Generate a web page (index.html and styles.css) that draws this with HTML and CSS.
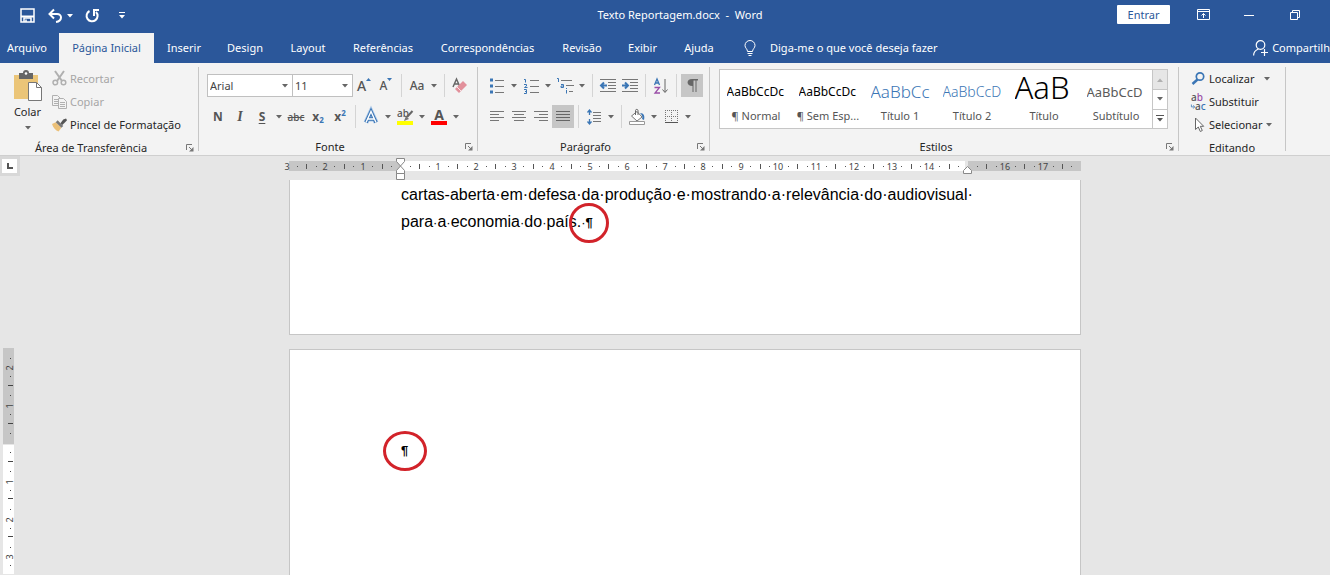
FILE: index.html
```html
<!DOCTYPE html>
<html lang="pt-BR">
<head>
<meta charset="utf-8">
<meta name="viewport" content="width=device-width, initial-scale=1">
<title>Texto Reportagem.docx - Word</title>
<link rel="stylesheet" href="styles.css">
</head>
<body>
<svg class="defs" aria-hidden="true">
  <symbol id="caret" viewBox="0 0 6 4"><path d="M0 0h6L3 3.4z" fill="currentColor"/></symbol>
  <symbol id="launch" viewBox="0 0 8 8"><path d="M.5 6V.5H6M3 3l3 3" fill="none" stroke="#777"/><path d="M7.500 3v4.500H3L7.500 3z" fill="#777"/></symbol>
</svg>

<header class="top">
  <div class="titlebar">
    <div class="quick">
      <button class="q" aria-label="Salvar"><svg width="15" height="15" viewBox="0 0 15 15"><path d="M1 1h13v13H1z" fill="none" stroke="#fff" stroke-width="1.500"/><path d="M1 8.500h13" stroke="#fff" stroke-width="2"/><path d="M4 14v-4h7v4M6 11.500v2.500" fill="none" stroke="#fff" stroke-width="1.500"/></svg></button>
      <button class="q undo" aria-label="Desfazer"><svg width="15" height="14" viewBox="0 0 15 14"><path d="M2 5h7c5.500 0 5.500 7-1 8" fill="none" stroke="#fff" stroke-width="2"/><path d="M6 .5L1.500 5 6 9.500" fill="none" stroke="#fff" stroke-width="2"/></svg><svg class="caret"><use href="#caret"/></svg></button>
      <button class="q" aria-label="Refazer"><svg width="15" height="15" viewBox="0 0 15 15"><path d="M4.500 3a5.500 5.500 0 1 0 6.500 1" fill="none" stroke="#fff" stroke-width="2"/><path d="M9 8V2h5" fill="none" stroke="#fff" stroke-width="2"/></svg></button>
      <button class="q" aria-label="Personalizar"><svg width="6" height="7" viewBox="0 0 6 7"><path d="M0 .5h6" stroke="#fff"/><path d="M0 3h6L3 6.400z" fill="#fff"/></svg></button>
    </div>
    <div class="doc-title">Texto Reportagem.docx&nbsp; -&nbsp; Word</div>
    <div class="window">
      <button class="signin">Entrar</button>
      <button class="w" aria-label="Opções da faixa"><svg width="13" height="11" viewBox="0 0 13 11"><path d="M.5.5h12v10H.5zM.5 2.500h12M6.500 9V4.500M4.500 6.500l2-2 2 2" fill="none" stroke="#fff"/></svg></button>
      <button class="w" aria-label="Minimizar"><svg width="10" height="10" viewBox="0 0 10 10"><path d="M0 5.500h10" stroke="#fff"/></svg></button>
      <button class="w" aria-label="Restaurar"><svg width="10" height="10" viewBox="0 0 10 10"><path d="M.5 2.500h7v7h-7zM2.500 2.500v-2h7v7h-2" fill="none" stroke="#fff"/></svg></button>
    </div>
  </div>
  <nav class="tabs">
    <a href="#">Arquivo</a><a href="#" class="on" aria-current="page">Página Inicial</a><a href="#">Inserir</a><a href="#">Design</a><a href="#">Layout</a><a href="#">Referências</a><a href="#">Correspondências</a><a href="#">Revisão</a><a href="#">Exibir</a><a href="#">Ajuda</a>
    <a href="#" class="tell"><svg width="12" height="16" viewBox="0 0 12 16"><path d="M3.500 11.500C3.500 9 1 8 1 5.500a5 5 0 0 1 10 0C11 8 8.500 9 8.500 11.500zM3.500 13.500h5M4.500 15.500h3" fill="none" stroke="#fff"/></svg>Diga-me o que você deseja fazer</a>
    <a href="#" class="share"><svg width="15" height="16" viewBox="0 0 15 16"><circle cx="7.500" cy="5" r="4.300" fill="none" stroke="#fff" stroke-width="1.200"/><path d="M.6 15.500c0-3.500 2-5.500 4.900-6.500M8 12.500h7M11.500 9v7" fill="none" stroke="#fff" stroke-width="1.200"/></svg>Compartilh</a>
  </nav>
</header>

<section class="ribbon">
  <div class="group clip">
    <div class="body">
      <button class="paste">
        <svg width="28" height="30" viewBox="0 0 28 30"><path d="M0 4h24v24H0z" fill="#ebc578"/><path d="M5 2h4a3 3 0 0 1 6 0h4v6H5z" fill="#666"/><circle cx="12" cy="2.500" r="1.300" fill="#fff"/><path d="M14.500 11.500h8l5 5v13h-13z" fill="#fff" stroke="#777"/><path d="M22.500 11.500v5h5" fill="none" stroke="#777"/></svg>
        <span>Colar</span><svg class="caret"><use href="#caret"/></svg>
      </button>
      <div class="stack">
        <button class="line" disabled><svg width="15" height="15" viewBox="0 0 15 15"><g fill="none" stroke="#b0b0b0" stroke-width="1.500"><path d="M3 0l7 10M12 0L5 10" stroke-width="2"/><circle cx="3.300" cy="11.500" r="2.300"/><circle cx="11.500" cy="11.500" r="2.300"/></g></svg>Recortar</button>
        <button class="line" disabled><svg width="15" height="14" viewBox="0 0 15 14"><g fill="#f3f3f3" stroke="#b0b0b0"><path d="M.5.5h5l3 3v7h-8zM2 4.500h4M2 6.500h4M2 8.500h4"/><path d="M6.500 3.500h5l3 3v7h-8zM8 7.500h5M8 9.500h5M8 11.500h5"/></g></svg>Copiar</button>
        <button class="line"><svg width="15" height="14" viewBox="0 0 16 14"><path d="M0 6l4-2 6 6-3 4C4 13 1 10 0 6z" fill="#ebc078"/><path d="M4 4l2-2 6 6-2 2z" fill="#777"/><path d="M9 5l3-4 3-1 1 2-2 2-3 3z" fill="#555"/></svg>Pincel de Formatação</button>
      </div>
    </div>
    <footer><span>Área de Transferência</span><button class="launch" aria-label="Mais"><svg><use href="#launch"/></svg></button></footer>
  </div>

  <div class="group font">
    <div class="body rows">
      <div class="row">
        <label class="combo wide"><select aria-label="Fonte"><option>Arial</option></select><svg class="caret"><use href="#caret"/></svg></label>
        <label class="combo"><select aria-label="Tamanho"><option>11</option></select><svg class="caret"><use href="#caret"/></svg></label>
        <button class="b gl first" aria-label="Aumentar"><span class="big">A</span><svg class="tri" width="5" height="3" viewBox="0 0 5 3"><path d="M0 3L2.500 0 5 3z" fill="#3b76b5"/></svg></button>
        <button class="b gl" aria-label="Diminuir"><span>A</span><svg class="tri" width="5" height="3" viewBox="0 0 5 3"><path d="M0 0L2.500 3 5 0z" fill="#3b76b5"/></svg></button>
        <i class="sep"></i>
        <button class="b d gl"><span class="ic">Aa</span><svg class="caret"><use href="#caret"/></svg></button>
        <i class="sep"></i>
        <button class="b" aria-label="Limpar"><svg width="16" height="16" viewBox="0 0 16 16"><path d="M1 9L4.500 1 8 9M2.500 6h4" fill="none" stroke="#666" stroke-width="1.500"/><path d="M11 3l4 4-8 8-4-4z" fill="#e2909b"/><path d="M5 9l4 4" stroke="#f8e4e7"/></svg></button>
      </div>
      <div class="row">
        <button class="b gl strong">N</button>
        <button class="b gl ital">I</button>
        <button class="b d gl strong"><span class="ic under">S</span><svg class="caret"><use href="#caret"/></svg></button>
        <button class="b gl strike">abc</button>
        <button class="b gl strong">x<sub>2</sub></button>
        <button class="b gl strong">x<sup>2</sup></button>
        <i class="sep"></i>
        <button class="b d" aria-label="Efeitos"><span class="ic"><svg width="16" height="16" viewBox="0 0 16 16"><path d="M3 13.500L8 2.500l5 11M5 10h6" fill="none" stroke="#a9c9ea" stroke-width="5"/><path d="M3 13.500L8 2.500l5 11M5 10h6" fill="none" stroke="#3b74b3" stroke-width="3.400"/><path d="M3 13.500L8 2.500l5 11M5 10h6" fill="none" stroke="#fff" stroke-width="1.400"/></svg></span><svg class="caret"><use href="#caret"/></svg></button>
        <button class="b d gl" aria-label="Realce"><span class="ic mark"><span>ab</span><svg width="10" height="11" viewBox="0 0 10 11"><path d="M9.500 1L4 7" stroke="#666" stroke-width="2"/><path d="M3 6l3 3-5 2z" fill="#777"/></svg></span><svg class="caret"><use href="#caret"/></svg></button>
        <button class="b d gl" aria-label="Cor"><span class="ic mark red"><span>A</span></span><svg class="caret"><use href="#caret"/></svg></button>
      </div>
    </div>
    <footer><span>Fonte</span><button class="launch" aria-label="Mais"><svg><use href="#launch"/></svg></button></footer>
  </div>

  <div class="group para">
    <div class="body rows">
      <div class="row">
        <button class="b d" aria-label="Marcadores"><span class="ic"><svg width="14" height="16" viewBox="0 0 14 16"><path d="M0 .5h3v3H0zM0 6.500h3v3H0zM0 12.500h3v3H0z" fill="#3b76b5"/><path d="M5 2.500h9M5 8.500h9M5 14.500h9" stroke="#777"/></svg></span><svg class="caret"><use href="#caret"/></svg></button>
        <button class="b d" aria-label="Numeração"><span class="ic"><svg width="15" height="16" viewBox="0 0 15 16"><path d="M0 1.500h1.500V4.500M0 6.500h2.500V8L.5 9.500h3M0 11.500h2.500v4H0M1 13.500h1.500" fill="none" stroke="#3b76b5"/><path d="M6 2.500h9M6 8.500h9M6 14.500h9" stroke="#777"/></svg></span><svg class="caret"><use href="#caret"/></svg></button>
        <button class="b d" aria-label="Vários níveis"><span class="ic"><svg width="17" height="16" viewBox="0 0 17 16"><path d="M0 .5h1.500V4M4 6.500h2.500v3H4V8h2M9.500 10v1M9.500 12v3.500" fill="none" stroke="#3b76b5"/><path d="M4 2.500h11M9 7.500h8M12 13.500h4" stroke="#777"/></svg></span><svg class="caret"><use href="#caret"/></svg></button>
        <i class="sep"></i>
        <button class="b" aria-label="Diminuir recuo"><svg width="16" height="13" viewBox="0 0 16 13"><path d="M0 .5h16M8 3.500h8M8 6.500h8M8 9.500h8M0 12.500h16" stroke="#777"/><path d="M7 6.500H1M4 3.500l-3 3 3 3" fill="none" stroke="#3b76b5" stroke-width="2"/></svg></button>
        <button class="b" aria-label="Aumentar recuo"><svg width="16" height="13" viewBox="0 0 16 13"><path d="M0 .5h16M8 3.500h8M8 6.500h8M8 9.500h8M0 12.500h16" stroke="#777"/><path d="M0 6.500h6M3 3.500l3 3-3 3" fill="none" stroke="#3b76b5" stroke-width="2"/></svg></button>
        <i class="sep"></i>
        <button class="b" aria-label="Classificar"><svg width="14" height="16" viewBox="0 0 14 16"><path d="M.5 7L3 1l2.500 6M1.500 5h3" fill="none" stroke="#3b76b5" stroke-width="1.300"/><path d="M.5 9.500h5L1 15h5" fill="none" stroke="#9a4fa8" stroke-width="1.300"/><path d="M11 1v13M8.500 11.500l2.500 3 2.500-3" fill="none" stroke="#666"/></svg></button>
        <i class="sep"></i>
        <button class="b sel" aria-label="Mostrar tudo" aria-pressed="true"><svg width="11" height="13" viewBox="0 0 11 13"><path d="M5 0h6v1.500H9.500V13H8.500V1.500h-2V13h-1V7C-1 7-1 0 5 0z" fill="#666"/></svg></button>
      </div>
      <div class="row">
        <button class="b" aria-label="Esquerda"><svg width="14" height="11" viewBox="0 0 14 11"><path d="M0 .5h14M0 3.500h9M0 6.500h14M0 9.500h9" stroke="#777"/></svg></button>
        <button class="b" aria-label="Centro"><svg width="14" height="11" viewBox="0 0 14 11"><path d="M0 .5h14M2 3.500h10M0 6.500h14M2 9.500h10" stroke="#777"/></svg></button>
        <button class="b" aria-label="Direita"><svg width="14" height="11" viewBox="0 0 14 11"><path d="M0 .5h14M5 3.500h9M0 6.500h14M5 9.500h9" stroke="#777"/></svg></button>
        <button class="b sel" aria-label="Justificar" aria-pressed="true"><svg width="14" height="11" viewBox="0 0 14 11"><path d="M0 .5h14M0 3.500h14M0 6.500h14M0 9.500h14" stroke="#666"/></svg></button>
        <i class="sep"></i>
        <button class="b d" aria-label="Espaçamento"><span class="ic"><svg width="14" height="16" viewBox="0 0 14 16"><path d="M6 3.500h8M6 6.500h8M6 9.500h8M6 12.500h8" stroke="#777"/><path d="M2.500 1v5M.5 3.500l2-2.500 2 2.500M2.500 15v-5M.5 12.500l2 2.500 2-2.500" fill="none" stroke="#3b76b5" stroke-width="1.300"/></svg></span><svg class="caret"><use href="#caret"/></svg></button>
        <i class="sep"></i>
        <button class="b d" aria-label="Sombreamento"><span class="ic"><svg width="16" height="16" viewBox="0 0 16 16"><path d="M2.500 7L8 2.500 13 8l-5 4z" fill="#fff" stroke="#777"/><path d="M6.500 6V1.500C6.500 0 9 0 9 1.500V6" fill="none" stroke="#666"/><path d="M11 4c4 0 5 3 4 7l-2-1c1-2 0-4-2-6z" fill="#3b76b5"/><path d="M.5 12.500h15v3H.5z" fill="#fff" stroke="#999"/></svg></span><svg class="caret"><use href="#caret"/></svg></button>
        <button class="b d" aria-label="Bordas"><span class="ic"><svg width="13" height="13" viewBox="0 0 13 13"><path d="M0 .5h13M0 6.500h13M.5 0v12M6.500 0v12M12.500 0v12" stroke="#777" stroke-dasharray="1 1"/><path d="M0 12.500h13" stroke="#555"/></svg></span><svg class="caret"><use href="#caret"/></svg></button>
      </div>
    </div>
    <footer><span>Parágrafo</span><button class="launch" aria-label="Mais"><svg><use href="#launch"/></svg></button></footer>
  </div>

  <div class="group styles">
    <div class="body">
      <div class="gallery">
        <button class="style"><span class="pv">AaBbCcDc</span><span>¶ Normal</span></button>
        <button class="style"><span class="pv">AaBbCcDc</span><span>¶ Sem Esp...</span></button>
        <button class="style"><span class="pv h1">AaBbCc</span><span>Título 1</span></button>
        <button class="style"><span class="pv h2">AaBbCcD</span><span>Título 2</span></button>
        <button class="style"><span class="pv tt">AaB</span><span>Título</span></button>
        <button class="style"><span class="pv st">AaBbCcD</span><span>Subtítulo</span></button>
        <div class="scroller">
          <button disabled aria-label="Acima"><svg class="caret up"><use href="#caret"/></svg></button>
          <button aria-label="Abaixo"><svg class="caret"><use href="#caret"/></svg></button>
          <button aria-label="Mais estilos"><svg width="8" height="7" viewBox="0 0 8 7"><path d="M0 .5h8" stroke="#555"/><path d="M1 3h6L4 6.500z" fill="#555"/></svg></button>
        </div>
      </div>
    </div>
    <footer><span>Estilos</span><button class="launch" aria-label="Mais"><svg><use href="#launch"/></svg></button></footer>
  </div>

  <div class="group edit">
    <div class="body">
      <div class="stack">
        <button class="line find"><svg width="15" height="13" viewBox="0 0 15 13"><circle cx="9" cy="4.500" r="3.700" fill="none" stroke="#3b76b5" stroke-width="1.700"/><path d="M6.500 7.500L1.500 12" stroke="#3b76b5" stroke-width="2.500"/></svg><span>Localizar</span><svg class="caret"><use href="#caret"/></svg></button>
        <button class="line"><span class="swap" aria-hidden="true"><span>a<b>b</b></span><span class="ac"><svg width="4" height="5" viewBox="0 0 5 5"><path d="M.5 0v3H4M3 1l1.500 2L3 5" fill="none" stroke="#3b76b5"/></svg>a<em>c</em></span></span>Substituir</button>
        <button class="line pick"><svg width="15" height="16" viewBox="0 0 15 16"><path d="M4.500 1v11.500l2.800-2.500 2 4.500 2-1-2-4.200h3.400z" fill="#fff" stroke="#666"/></svg><span>Selecionar</span><svg class="caret"><use href="#caret"/></svg></button>
      </div>
    </div>
    <footer><span>Editando</span></footer>
  </div>
</section>

<main class="work">
  <aside class="side">
    <button class="tabstop" aria-label="Tabulação"><svg width="6" height="6" viewBox="0 0 6 6"><path d="M1 0v5h5" fill="none" stroke="#555" stroke-width="2"/></svg></button>
    <svg class="vruler" width="11" height="226" viewBox="0 0 11 226">
      <path d="M0 0h11v96H0z" fill="#c6c6c6"/><path d="M0 97h11v129H0z" fill="#fff"/>
      <g stroke="#444" shape-rendering="crispEdges"><path d="M7.500 9.500V226" stroke-dasharray="1 17.900"/><path d="M7.500 37V226" stroke-width="5" stroke-dasharray="1 36.800"/></g>
      <g class="num" transform="rotate(-90)"><text x="-20" y="10">2</text><text x="-58" y="10">1</text><text x="-134" y="10">1</text><text x="-172" y="10">2</text><text x="-209" y="10">3</text></g>
    </svg>
  </aside>
  <div class="canvas">
    <svg class="hruler" width="792" height="24" viewBox="0 0 792 24">
      <path d="M0 5h792v10H0z" fill="#c6c6c6"/><path d="M112 5h564v10H112z" fill="#fff"/><path d="M676 5h3v10h-3z" fill="#e6e6e6"/>
      <g stroke="#555" shape-rendering="crispEdges"><path d="M7.600 10.500H790" stroke-dasharray="1 17.900"/><path d="M17 10.500H790" stroke-width="5" stroke-dasharray="1 36.800"/></g>
      <g class="num"><text x="-2" y="14">3</text><text x="36" y="14">2</text><text x="74" y="14">1</text><text x="149" y="14">1</text><text x="187" y="14">2</text><text x="225" y="14">3</text><text x="263" y="14">4</text><text x="301" y="14">5</text><text x="338" y="14">6</text><text x="376" y="14">7</text><text x="414" y="14">8</text><text x="452" y="14">9</text><text x="489" y="14">10</text><text x="527" y="14">11</text><text x="565" y="14">12</text><text x="603" y="14">13</text><text x="640" y="14">14</text><text x="716" y="14">16</text><text x="754" y="14">17</text></g>
      <g fill="#fff" stroke="#888"><path d="M107.500 2.500h8v3l-4 4.500-4-4.500zM107.500 17.500v-3l4-4.500 4 4.500v3zM107.500 17.500h8v6h-8z"/><path d="M674.500 17.500v-3l4-4 4 4v3z"/></g>
    </svg>
    <article class="page first-page">
      <p class="full">cartas-aberta<i>·</i>em<i>·</i>defesa<i>·</i>da<i>·</i>produção<i>·</i>e<i>·</i>mostrando<i>·</i>a<i>·</i>relevância<i>·</i>do<i>·</i>audiovisual<i>·</i></p>
      <p>para<i>·</i>a<i>·</i>economia<i>·</i>do<i>·</i>país.<i>·</i><span class="mark-end">¶<span class="ring"></span></span></p>
    </article>
    <article class="page second-page">
      <p><span class="mark-end">¶<span class="ring oval"></span></span></p>
    </article>
  </div>
</main>
</body>
</html>
```

FILE: styles.css
```css
* { box-sizing: border-box; }
body {
  margin: 0;
  height: 100vh;
  display: flex;
  flex-direction: column;
  overflow: hidden;
  background: #e6e6e6;
  color: #262626;
  font: 11px/16px "Noto Sans", "Open Sans", sans-serif;
}
button {
  padding: 0;
  border: 0;
  background: none;
  color: inherit;
  font: inherit;
}
a { color: inherit; text-decoration: none; }
svg { flex: none; display: block; overflow: visible; }
.defs { position: absolute; width: 0; height: 0; }
.caret { width: 6px; height: 4px; color: #666; }

/* Title bar and tabs */
.top { background: #2b579a; color: #fff; }
.titlebar {
  display: grid;
  grid-template-columns: 1fr auto 1fr;
  align-items: center;
  height: 33px;
  padding-bottom: 4px;
}
.quick { display: flex; align-items: center; padding-left: 13px; }
.q { display: flex; align-items: center; justify-content: center; gap: 4px; width: 29px; height: 24px; }
.q.undo { width: 36px; }
.q .caret { color: #fff; }
.q svg { margin-top: 2px; }
.doc-title { padding-left: 30px; }
.window { display: flex; align-items: center; justify-content: flex-end; padding-right: 12px; }
.signin { width: 53px; height: 19px; margin-right: 10px; border-radius: 1px; background: #fff; color: #2b579a; }
.w { display: grid; place-items: center; width: 46px; height: 28px; }
.tabs {
  display: grid;
  grid-template-columns: 59px 95px 60px 62px 64px 86px 123px 66px 55px 58px auto 1fr;
  align-items: stretch;
  height: 30px;
  white-space: nowrap;
}
.tabs a { display: flex; align-items: center; justify-content: center; }
.tabs a:first-child { padding-right: 5px; }
.tabs .on { background: #f3f3f3; color: #2b579a; }
.tabs .tell { gap: 14px; padding-left: 16px; }
.tabs .share { justify-content: flex-end; gap: 4px; }

/* Ribbon */
.ribbon { display: flex; height: 93px; padding-top: 4px; background: #f3f3f3; border-bottom: 1px solid #cfcfcf; }
.group { display: flex; flex-direction: column; height: 84px; border-right: 1px solid #c6c6c6; }
.body { display: flex; flex: 1; }
.group footer { position: relative; display: flex; justify-content: center; height: 16px; padding-right: 16px; line-height: 24px; }
.launch { position: absolute; right: 4px; top: 8px; }
.launch svg { width: 8px; height: 8px; }
.clip { width: 199px; }
.font { width: 279px; }
.para { width: 232px; }
.styles { width: 469px; }
.edit { width: 107px; }
.group.edit footer { padding: 0; }
.paste { display: flex; flex-direction: column; align-items: center; width: 48px; padding: 4px 0 0 7px; }
.paste span { margin-top: 3px; }
.paste .caret { margin-top: 6px; }
.stack { display: flex; flex-direction: column; padding-left: 4px; }
.line { display: flex; align-items: center; gap: 3px; height: 23px; white-space: nowrap; }
.line:disabled { color: #a6a6a6; }
.edit .stack { padding-left: 12px; }
.find .caret { margin-left: 7px; }

.rows { flex-direction: column; gap: 8px; padding: 7px 0 0 8px; }
.row { display: flex; height: 23px; align-items: stretch; }
.b { display: flex; align-items: center; justify-content: center; width: 22px; }
.b.d { width: 34px; justify-content: flex-start; }
.ic { display: flex; align-items: center; justify-content: center; width: 22px; }
.b.d .caret { margin-left: 3px; }
.b.d .mark + .caret { margin-left: 3px; }
.sep { width: 1px; margin: 0 4px; background: #d4d4d4; }
.sel { background: #c6c6c6; }
.combo { display: grid; width: 61px; border: 1px solid #c0c0c0; background: #fff; align-items: center; }
.combo.wide { width: 85px; border-right: 0; }
.combo select, .combo .caret { grid-area: 1 / 1; }
.combo select { appearance: none; height: 21px; padding: 0 2px; border: 0; background: none; color: #444; font: inherit; }
.combo .caret { justify-self: end; margin-right: 4px; pointer-events: none; }
.gl { color: #555; font-size: 12px; font-weight: 500; }
.gl .big { font-size: 14px; }
.tri { align-self: flex-start; margin-top: 4px; }
.strong { font-weight: 700; }
.ital { font: italic 700 14px/16px "Liberation Serif", serif; }
.under { text-decoration: underline; text-underline-offset: 2px; }
.strike { font-size: 10px; text-decoration: line-through; }
.strong sub, .strong sup { color: #3b76b5; font-size: 8px; line-height: 8px; }
.strong sub { align-self: flex-end; margin-bottom: 4px; }
.strong sup { align-self: flex-start; margin-top: 4px; }
.mark { position: relative; align-self: center; height: 16px; margin: 0 3px; width: 16px; font-size: 10px; line-height: 12px; border-bottom: 4px solid #ff0; }
.mark:not(.red) { justify-content: flex-start; align-items: flex-start; line-height: 8px; }
.mark svg { position: absolute; right: 0; top: 1px; }
.red { border-color: #f00; font-size: 14px; font-weight: 700; }

.styles .body { padding: 2px 0 0 9px; }
.gallery { display: flex; height: 60px; border: 1px solid #c6c6c6; background: #fff; }
.style { display: flex; flex-direction: column; align-items: center; justify-content: flex-start; width: 72px; padding-top: 6px; color: #555; white-space: nowrap; }
.pv { width: 59px; height: 32px; overflow: hidden; color: #000; font-size: 12px; line-height: 32px; text-align: left; }
.h1 { color: #3b76b5; font-size: 17px; font-weight: 300; }
.h2 { color: #3b76b5; font-size: 14px; font-weight: 300; }
.tt { font-size: 31px; line-height: 22px; font-weight: 300; }
.st { color: #5a5a5a; font-size: 13px; }
.scroller { display: grid; grid-template-rows: 1fr 1fr 1fr; width: 15px; border-left: 1px solid #c6c6c6; }
.scroller button { display: grid; place-items: center; }
.scroller button + button { border-top: 1px solid #c6c6c6; }
.scroller button:disabled { background: #e6e6e6; }
.up { transform: rotate(180deg); color: #b0b0b0; }
.swap { display: flex; flex-direction: column; width: 15px; color: #555; font-size: 10px; font-weight: 500; line-height: 9px; text-align: left; }
.swap b { color: #9a4fa8; font-weight: 500; }
.swap em { color: #3b76b5; font-style: normal; }
.ac { display: flex; align-items: center; }

/* Document area */
.work { flex: 1; display: flex; min-height: 0; overflow: hidden; }
.side { width: 40px; }
.tabstop { display: grid; place-items: center; width: 20px; height: 20px; border: 3px solid #d8d8d8; border-left-width: 2px; background: #fff; }
.vruler { margin: 172px 0 0 3px; }
.num { fill: #444; font-size: 9px; text-anchor: middle; }
.canvas { flex: 1; display: flex; flex-direction: column; align-items: center; }
.hruler { flex: none; }
.page {
  width: 792px;
  flex: none;
  border: 1px solid #c6c6c6;
  background: #fff;
  color: #000;
  font: 16px/27px "Liberation Sans", Arial, sans-serif;
  padding-left: 111px;
}
.page p { margin: 0; white-space: nowrap; }
.page i { font-size: 13px; font-style: normal; }
.page .full i { font-size: 16px; }
.first-page { height: 155px; padding-top: 1px; border-top: 0; }
.second-page { height: 1122px; margin-top: 14px; padding-top: 86px; }
.mark-end { position: relative; display: inline-block; font-size: 13px; font-weight: 700; }
.ring {
  position: absolute;
  left: 50%;
  top: 50%;
  width: 40px;
  height: 40px;
  transform: translate(-50%, -50%);
  border: 3px solid #d2232a;
  border-radius: 50%;
}
.oval { width: 44px; }
```
